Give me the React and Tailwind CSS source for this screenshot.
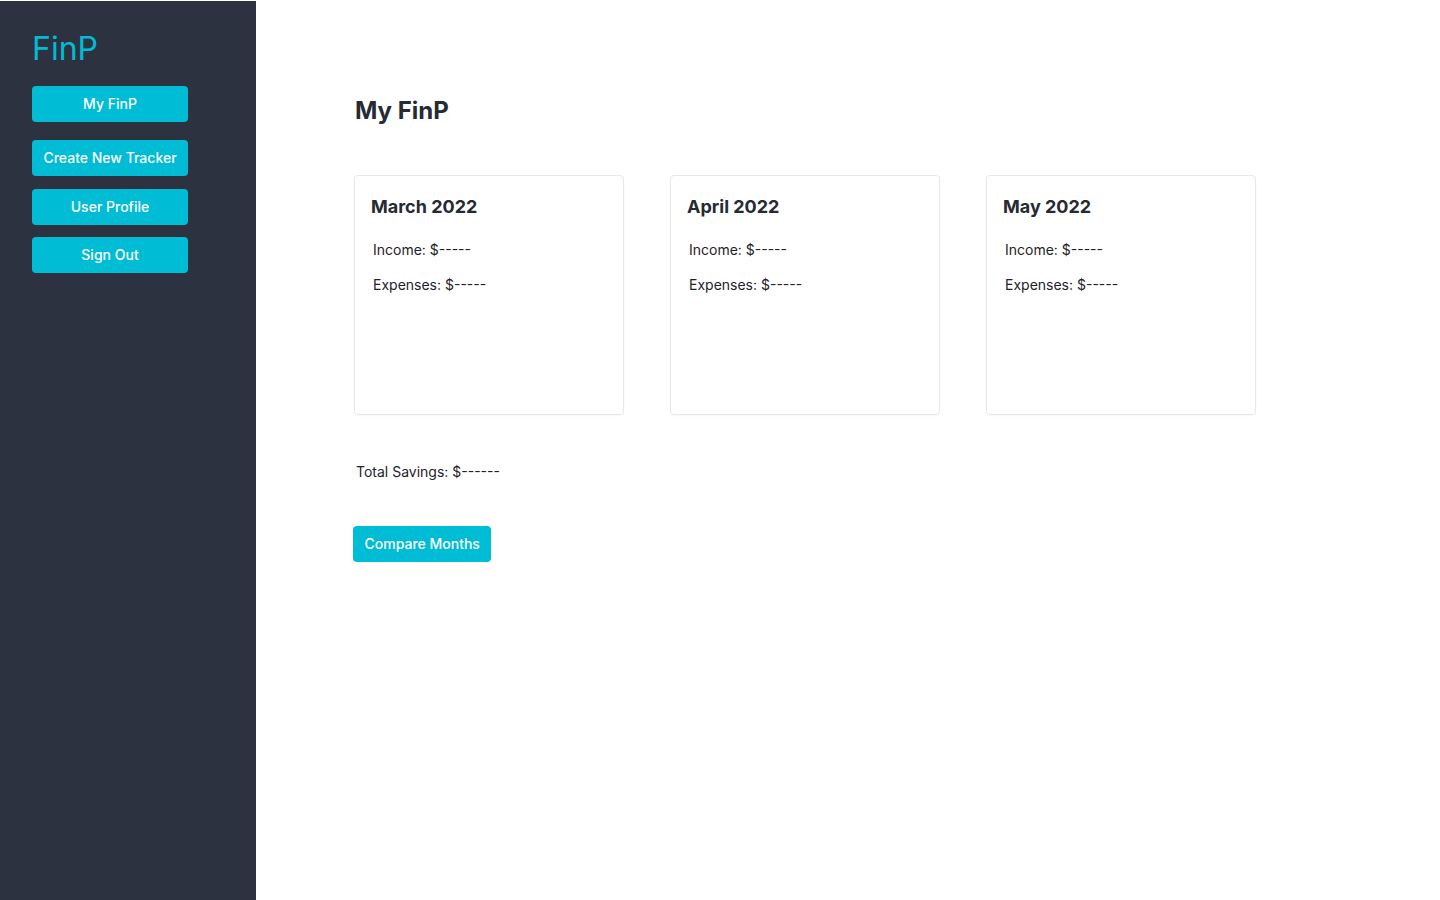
import React from 'react';

const months = ['March 2022', 'April 2022', 'May 2022'];

const NavButton = ({ children }) => (
  <button className="w-[156px] h-9 rounded bg-[#00bcd4] text-white text-sm font-medium">
    {children}
  </button>
);

const MonthCard = ({ title }) => (
  <div className="w-[270px] h-[240px] border border-[#e6e8eb] rounded shadow-[0_1px_2px_rgba(0,0,0,0.04)] px-4 pt-[19px]">
    <h2 className="text-lg font-bold text-[#252a33] leading-6">{title}</h2>
    <p className="text-sm text-[#1f2329] mt-[21px] ml-0.5">Income: $-----</p>
    <p className="text-sm text-[#1f2329] mt-[15px] ml-0.5">Expenses: $-----</p>
  </div>
);

export default function App() {
  return (
    <div className="flex min-h-[900px] bg-white font-['Inter','Noto_Sans',sans-serif]">
      {/* Sidebar */}
      <aside className="w-64 shrink-0 bg-[#2d3240] mt-px px-8 pt-[28px]">
        <div className="text-[32px] leading-10 text-[#00bcd4] font-normal">FinP</div>
        <nav className="flex flex-col mt-[17px]">
          <NavButton>My FinP</NavButton>
          <div className="mt-[18px]"><NavButton>Create New Tracker</NavButton></div>
          <div className="mt-[13px]"><NavButton>User Profile</NavButton></div>
          <div className="mt-3"><NavButton>Sign Out</NavButton></div>
        </nav>
      </aside>

      {/* Main */}
      <main className="flex-1 pl-[98px] pt-[95px]">
        <h1 className="text-2xl font-bold text-[#252a33] leading-8 ml-px">My FinP</h1>
        <div className="flex gap-[46px] mt-[48px]">
          {months.map((m) => (
            <MonthCard key={m} title={m} />
          ))}
        </div>
        <p className="text-sm text-[#1f2329] mt-[47px] ml-0.5">Total Savings: $------</p>
        <button className="mt-[44px] -ml-px h-9 px-[11.5px] rounded bg-[#00bcd4] text-white text-sm font-medium">
          Compare Months
        </button>
      </main>
    </div>
  );
}
